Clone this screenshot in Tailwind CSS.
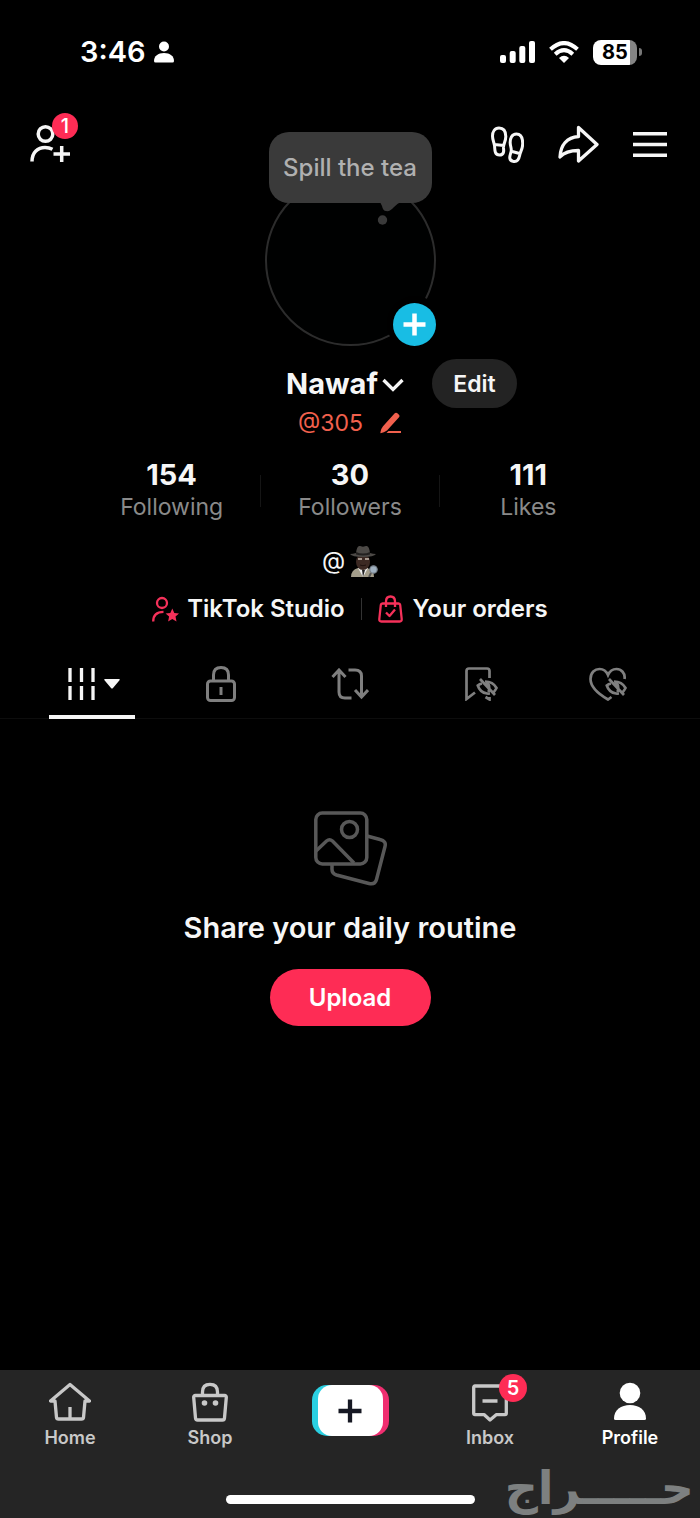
<!DOCTYPE html>
<html lang="en">
<head>
<meta charset="utf-8">
<meta name="viewport" content="width=device-width, initial-scale=1">
<title>Profile</title>
<script src="https://cdn.jsdelivr.net/npm/@tailwindcss/browser@4"></script>
</head>
<body class="flex min-h-screen flex-col bg-black font-['Inter','Noto_Sans',sans-serif] text-[#f6f6f6]">

<!-- Status bar -->
<header class="flex h-[104px] items-center justify-between pr-[58px] pl-20">
  <div class="flex items-center gap-2">
    <span class="text-[29px] leading-8 font-semibold text-white">3:46</span>
    <svg class="h-[22px] w-5" viewBox="0 0 20 22" fill="#fff" aria-hidden="true"><circle cx="10" cy="5.500" r="5"/><path d="M0 20c0-5 4-8 10-8s10 3 10 8q0 1.500-1.500 1.500h-17Q0 21.500 0 20z"/></svg>
  </div>
  <div class="flex items-center gap-[14px]">
    <svg class="h-[22px] w-[35px]" viewBox="0 0 35 22" fill="#fff" aria-hidden="true"><rect y="14" width="6" height="8" rx="2"/><rect x="9.700" y="10" width="6" height="12" rx="2"/><rect x="19.300" y="5" width="6" height="17" rx="2"/><rect x="29" width="6" height="22" rx="2"/></svg>
    <svg class="h-[22px] w-[30px]" viewBox="0 0 30 22" fill="none" stroke="#fff" stroke-width="4" aria-hidden="true"><path d="M1.500 8.300q13.500-12.500 27 0M6.200 13.200q8.800-8 17.600 0"/><path d="M10 17q5-4.500 10 0l-5 5z" fill="#fff" stroke="none"/></svg>
    <div class="flex items-center gap-[2px]">
      <span class="flex h-[25px] w-11 items-center justify-center rounded-lg bg-linear-to-r from-white from-85% to-[#858585] to-85% text-[20px] leading-6 font-bold text-black">85</span>
      <span class="h-2 w-[3px] rounded-r-full bg-[#777]"></span>
    </div>
  </div>
</header>

<main>
  <!-- Top actions and avatar -->
  <div class="grid grid-cols-[1fr_auto_1fr] items-start">
    <button class="relative mt-5 ml-[30px] h-[41px] w-12" aria-label="Add friends, 1 new">
      <svg class="h-[41px] w-[41px]" viewBox="0 0 41 41" fill="none" stroke="#f6f6f6" stroke-width="3.500" aria-hidden="true"><circle cx="15.500" cy="10" r="7.300"/><path d="M2 37.500C2 28 8 23.500 15 23.500q4 0 7.500 1.800M23.500 30H40M31.700 22v16"/></svg>
      <span class="absolute -top-[11px] left-[22px] flex h-[26px] w-[26px] items-center justify-center rounded-full bg-[#fe2c55] text-[20px] leading-6 font-medium text-white">1</span>
    </button>
    <div class="pt-[71px]">
      <div class="relative h-[171px] w-[171px]">
        <button class="block h-full w-full rounded-full border-2 border-[#2c2c2c] bg-[#000101]" aria-label="Profile photo"></button>
        <button class="absolute -top-[43px] left-1 h-[71px] w-[163px] rounded-[20px] bg-[#3a3a3a] text-[24px] leading-7 font-medium whitespace-nowrap text-[#b0b0b0]">Spill the tea
          <svg class="absolute top-[70px] left-[108px] h-[24px] w-[24px]" viewBox="0 0 24 24" fill="#3a3a3a" aria-hidden="true"><path d="M3 0h21q-3 1-7 5-4 5-8 4-3 0-4-5z"/><circle cx="5.500" cy="18" r="4.700"/></svg>
        </button>
        <button class="absolute -right-[7px] -bottom-[6px] flex h-[56px] w-[56px] items-center justify-center rounded-full bg-black" aria-label="Add story">
          <svg class="h-[43px] w-[43px]" viewBox="0 0 43 43" aria-hidden="true"><circle cx="21.500" cy="21.500" r="21.500" fill="#18bde4"/><path d="M10.500 21.500h22M21.500 10.500v22" stroke="#fff" stroke-width="4.500"/></svg>
        </button>
      </div>
    </div>
    <div class="mt-5 mr-[33px] flex items-center justify-end gap-[34px]">
      <button aria-label="Profile views">
        <svg class="h-[41px] w-[33px]" viewBox="0 0 33 41" fill="none" stroke="#f6f6f6" stroke-width="3" aria-hidden="true"><path d="M8 4C3.500 4 1.500 8 1.500 12c0 4 1.500 6 2 9.500s-.500 9.500 5 9.500c4.500 0 4.500-4 4-7-.500-4 2.300-6 2.300-11.500C14.800 7 12.500 4 8 4zM3.500 20.500l9.500 1"/><path d="M25.500 10c-5 0-6.500 5-6.300 9 .2 4 1.800 6 .800 9-1 3.500-3 8 2 9.300 4.500 1 6-2.500 6.700-6 .8-4.500 3-6 3-11.800C31.700 14 30 10 25.500 10zM19.500 27l9 2.500"/></svg>
      </button>
      <button aria-label="Share profile">
        <svg class="h-[41px] w-[41px]" viewBox="0 0 41 41" fill="none" stroke="#f6f6f6" stroke-width="3.300" stroke-linejoin="round" aria-hidden="true"><path d="M20.500 3.500 39 20.500 20.500 37V26.500C12 26.500 6.500 28 2 33 2.500 21 9 13.500 20.500 12.500z"/></svg>
      </button>
      <button aria-label="Menu">
        <svg class="h-[41px] w-[34px]" viewBox="0 0 34 41" stroke="#f6f6f6" stroke-width="3.400" aria-hidden="true"><path d="M0 9.700h34M0 20.500h34M0 31.300h34"/></svg>
      </button>
    </div>
  </div>

  <!-- Name and handle -->
  <div class="mt-[13px] grid grid-cols-[1fr_auto_1fr] items-center">
    <h1 class="col-start-2"><button class="flex items-center gap-1 pr-[10px] text-[29px] leading-8 font-bold">Nawaf
      <svg class="mt-[2px] h-3.5 w-[22px]" viewBox="0 0 22 14" fill="none" stroke="currentColor" stroke-width="3.300" aria-hidden="true"><path d="m1.500 2 9.500 9.500L20.500 2"/></svg></button></h1>
    <button class="ml-[18px] h-[49px] w-[85px] rounded-full bg-[#232323] text-[23px] leading-7 font-semibold">Edit</button>
  </div>
  <button class="mx-auto flex h-[30px] items-center gap-4 text-[23px] leading-7 text-[#f1604d]">@305
    <svg class="h-[22px] w-[23px]" viewBox="0 0 23 22" fill="currentColor" aria-hidden="true"><path d="M15.500 1.500q1.500-1.700 3.200 0l1 1q1.600 1.500.100 3.100L8 18.500Q5 20.500 1.500 21.200 1 18 4 14.200zM9.500 19H22v2H7.500z"/></svg>
  </button>

  <!-- Stats -->
  <div class="mx-auto mt-[21px] grid max-w-[534px] grid-cols-[1fr_1px_1fr_1px_1fr] items-center text-center">
    <a href="#following" class="flex flex-col"><strong class="text-[29px] leading-8 font-bold">154</strong><span class="text-[23px] leading-8 text-[#8a8a8a]">Following</span></a>
    <span class="h-8 bg-[#151515]"></span>
    <a href="#followers" class="flex flex-col"><strong class="text-[29px] leading-8 font-bold">30</strong><span class="text-[23px] leading-8 text-[#8a8a8a]">Followers</span></a>
    <span class="h-8 bg-[#151515]"></span>
    <a href="#likes" class="flex flex-col"><strong class="text-[29px] leading-8 font-bold">111</strong><span class="text-[23px] leading-8 text-[#8a8a8a]">Likes</span></a>
  </div>

  <!-- Bio -->
  <p class="mt-[22px] flex h-8 items-center justify-center gap-1 text-[24px] leading-8">@
    <svg class="h-8 w-[29px]" viewBox="0 0 29 32" role="img" aria-label="Detective"><path d="M2 32q0-7 7-9h9q7 2 7 9z" fill="#a49e8b"/><path d="m9 23 5 9 5-9z" fill="#eee"/><path d="m13 25 1 7 2-7z" fill="#222"/><ellipse cx="14" cy="17" rx="7" ry="8" fill="#3c2923"/><path d="M9 14h4m3 0h4" stroke="#c9bdb2" stroke-width="1.500"/><path d="M11 20q3 1.500 6 0" stroke="#20120f" fill="none"/><path d="M1 9q3 0 6-1Q8 0 11 1l3 .7L17 1q3-1 4 7 3 1 6 1-2 3-13 3T1 9z" fill="#4c4946"/><path d="M7 7q7 3 14 0v2.500q-7 2-14 0z" fill="#22201f"/><circle cx="24.500" cy="24.500" r="3.700" fill="#9fb0c0" stroke="#77808a" stroke-width="1.200"/><path d="m22 28-2 4" stroke="#555" stroke-width="2"/></svg>
  </p>

  <!-- Shortcuts -->
  <div class="mt-4 flex h-8 items-center justify-center text-[24px] leading-8 font-semibold">
    <a href="#studio" class="flex items-center gap-2 pr-4">
      <svg class="h-[27px] w-[27px]" viewBox="0 0 27 27" fill="none" stroke="#f5315a" stroke-width="2.300" aria-hidden="true"><circle cx="10" cy="7" r="5"/><path d="M1.200 25.500C1.200 19 5 15.800 11.500 15.800" /><path d="m20.300 12.500 2 4.400 4.700.5-3.500 3.200 1 4.900-4.200-2.500-4.200 2.500 1-4.900-3.500-3.200 4.700-.5z" fill="#f5315a" stroke="none"/></svg>
      TikTok Studio</a>
    <span class="h-[22px] w-px bg-[#333]"></span>
    <a href="#orders" class="flex items-center gap-[10px] pl-4">
      <svg class="h-[28px] w-[25px]" viewBox="0 0 25 28" fill="none" stroke="#f5315a" stroke-width="2.300" stroke-linejoin="round" aria-hidden="true"><path d="M4.500 8.500h16q1.500 0 1.700 1.500l1.500 14q.200 2.500-2 2.500H3.300q-2.200 0-2-2.500l1.500-14q.200-1.500 1.700-1.500z"/><path d="M8 12V6.500q0-5 4.500-5T17 6.500V12M8 17.500l3.500 3.500 5.500-6.500"/></svg>
      Your orders</a>
  </div>

  <!-- Content tabs -->
  <nav class="mt-6 border-b border-[#0d0d0d] px-7" aria-label="Content">
    <div class="grid h-[69px] grid-cols-5 text-[#7f7f7f]">
      <button class="relative flex items-center justify-center gap-2 text-[#f6f6f6]" aria-label="Posts" aria-current="page">
        <svg class="ml-1 h-8 w-[28px]" viewBox="0 0 28 32" stroke="currentColor" stroke-width="3.300" aria-hidden="true"><path d="M2 0v14M2 18v14M13.500 0v14M13.500 18v14M25 0v14M25 18v14"/></svg>
        <svg class="h-2.5 w-4" viewBox="0 0 16 10" fill="currentColor" aria-hidden="true"><path d="M1 0h14q1.500 0 .500 1.200L9 9q-1 1-2 0L.500 1.200Q-.500 0 1 0z"/></svg>
        <span class="absolute -bottom-[1px] h-[4px] w-[86px] bg-[#f6f6f6]"></span>
      </button>
      <button class="flex items-center justify-center" aria-label="Private">
        <svg class="h-[36px] w-[30px]" viewBox="0 0 30 36" fill="none" stroke="currentColor" stroke-width="3" aria-hidden="true"><rect x="1.500" y="15" width="27" height="19.500" rx="3"/><path d="M7.500 15V9q0-7.500 7.500-7.500T22.500 9v6M15 21v8"/></svg>
      </button>
      <button class="flex items-center justify-center" aria-label="Reposts">
        <svg class="h-8 w-[38px]" viewBox="0 0 38 32" fill="none" stroke="currentColor" stroke-width="3" aria-hidden="true"><path d="M1.500 9 8 2l6.500 7M8 3v21q0 6 6 6h6.500M17.500 2H24q6.500 0 6.500 6v20M24 22l6.500 7 6.500-7"/></svg>
      </button>
      <button class="flex items-center justify-center" aria-label="Favorites">
        <svg class="ml-1 h-[34px] w-[34px]" viewBox="0 0 34 34" fill="none" stroke="currentColor" stroke-width="2.700" aria-hidden="true"><path d="M11 25.500 2.500 32V4q0-2.500 2.500-2.500h18Q25.500 1.500 25.500 4v7M21.500 30l4 2.500V30"/><g transform="translate(13 12)"><path d="M5 4.500Q2.500 5 .800 6.500 3 13.500 10 14.500q1 .2 3 0M8 2.500q8 0 11.500 6.500-1.500 3-3.500 5"/><path d="M3 0 18 16M9 3q5 3 2.500 10"/></g></svg>
      </button>
      <button class="flex items-center justify-center" aria-label="Liked">
        <svg class="h-[34px] w-[38px]" viewBox="0 0 38 34" fill="none" stroke="currentColor" stroke-width="2.700" aria-hidden="true"><path d="M35.500 12C36.500 6 32 2 27.500 2 23 2 20.500 4.500 19 8 17.500 4.500 15 2 10.500 2 6 2 1.500 5.500 1.500 12c0 8 8 15 17.500 20.500l3.500-2.500"/><g transform="translate(17 12)"><path d="M5 4.500Q2.500 5 .800 6.500 3 13.500 10 14.500q1 .2 3 0M8 2.500q8 0 11.500 6.500-1.500 3-3.500 5"/><path d="M3 0 18 16M9 3q5 3 2.500 10"/></g></svg>
      </button>
    </div>
  </nav>

  <!-- Empty state -->
  <section class="flex flex-col items-center pt-[92px]">
    <svg class="h-[75px] w-[73px]" viewBox="0 0 73 75" fill="none" stroke="#585858" stroke-width="3.500" aria-hidden="true"><rect x="1.800" y="2" width="51" height="51" rx="6.500"/><circle cx="35.500" cy="18.500" r="8"/><path d="M2 40 12.500 30q3-2.500 6 0L40 52M53 25l13 3.500q6.500 1.500 5 7l-8.500 33q-1.500 5.500-7.500 4L22.500 64q-5-1.500-4.500-7v-3"/></svg>
    <h2 class="mt-6 text-[29px] leading-9 font-semibold">Share your daily routine</h2>
    <button class="mt-[23px] h-[57px] w-[161px] rounded-full bg-[#fe2c55] text-[24px] leading-7 font-semibold text-white">Upload</button>
  </section>
</main>

<!-- Bottom navigation -->
<footer class="relative mt-auto flex h-[148px] flex-col justify-between bg-[#252525] pb-[14px]">
  <nav class="grid grid-cols-5 text-[18px] leading-6 font-semibold text-[#c8c8c8]" aria-label="Main">
    <a href="#home" class="flex flex-col items-center gap-[4px] pt-3">
      <svg class="h-10 w-[42px]" viewBox="0 0 42 40" fill="none" stroke="currentColor" stroke-width="3.300" stroke-linejoin="round" aria-hidden="true"><path d="M1.500 19 21 2.500 40.500 19H36l-1.500 16.500q-.200 1.500-2 1.500h-23q-1.800 0-2-1.500L6 19zM21 25v11"/></svg>Home</a>
    <a href="#shop" class="flex flex-col items-center gap-[4px] pt-3">
      <svg class="h-10 w-[36px]" viewBox="0 0 36 40" fill="none" stroke="currentColor" stroke-width="3.300" stroke-linejoin="round" aria-hidden="true"><path d="M3.500 13.500h29q2 0 1.800 2L32.500 36q-.200 2-2 2h-25q-1.800 0-2-2L1.700 15.500q-.200-2 1.800-2zM10.500 13v-3q0-7.700 7.500-7.700T25.500 10v3"/><g fill="currentColor" stroke="none"><circle cx="12.500" cy="21" r="2.800"/><circle cx="23.500" cy="21" r="2.800"/></g></svg>Shop</a>
    <a href="#create" class="flex flex-col items-center pt-[15px]" aria-label="Create">
      <svg class="h-[51px] w-[77px]" viewBox="0 0 77 51" aria-hidden="true"><rect width="60" height="51" rx="15" fill="#2ad0e2"/><rect x="17" width="60" height="51" rx="15" fill="#f02e70"/><rect x="6" width="65" height="51" rx="14" fill="#fff"/><path d="M26.500 26h23M38 14.500v23" stroke="#161823" stroke-width="4.300"/></svg></a>
    <a href="#inbox" class="flex flex-col items-center gap-[4px] pt-3">
      <span class="relative"><svg class="h-10 w-9" viewBox="0 0 36 40" fill="none" stroke="currentColor" stroke-width="3.300" stroke-linejoin="round" aria-hidden="true"><path d="M3 4h30q1.300 0 1.300 1.300v26q0 1.300-1.300 1.300h-8.500L18 38l-6-5.400H3q-1.300 0-1.300-1.300v-26Q1.700 4 3 4zM10.500 19h15"/></svg>
        <span class="absolute -top-2 left-[27px] flex h-7 w-7 items-center justify-center rounded-full bg-[#fe2c55] text-[20px] text-white">5</span></span>Inbox</a>
    <a href="#profile" class="flex flex-col items-center gap-[4px] pt-3 text-white" aria-current="page">
      <svg class="h-10 w-8" viewBox="0 0 32 40" fill="currentColor" aria-hidden="true"><circle cx="16" cy="11" r="10.300"/><path d="M0 36.500C0 28 7 23 16 23s16 5 16 13.500q0 1.500-1.500 1.500h-29Q0 38 0 36.500z"/></svg>Profile</a>
  </nav>
  <div class="mx-auto h-[9px] w-[249px] rounded-full bg-white"></div>
  <div lang="ar" dir="rtl" class="absolute right-[6px] bottom-0 font-['DejaVu_Sans',sans-serif] text-[46px] leading-[60px] font-bold text-[#7d8080]">حـــــراج</div>
</footer>
</body>
</html>
